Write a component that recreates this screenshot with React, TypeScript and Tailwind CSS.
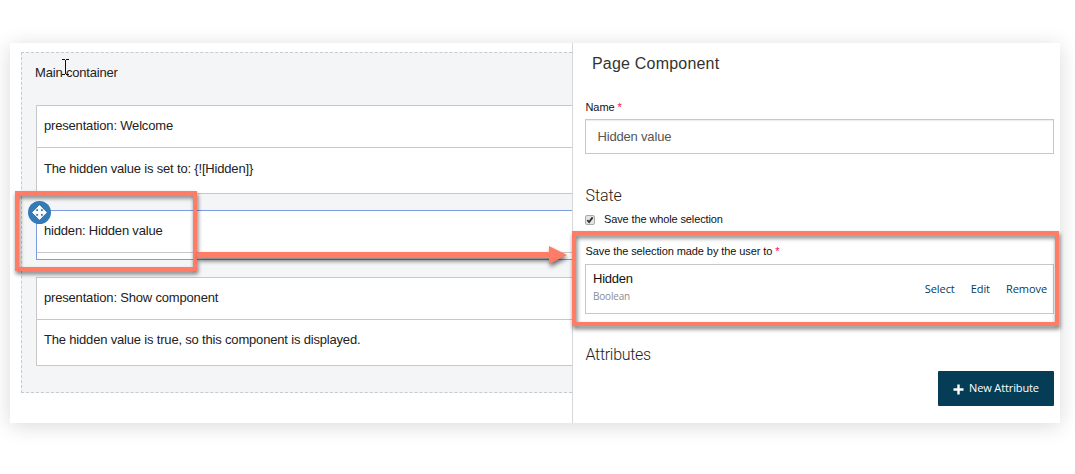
import React from "react";

function Asterisk() {
  return <span className="text-[#ff0a3c]">*</span>;
}

function MoveHandle() {
  return (
    <svg className="absolute -left-[9px] -top-[10px]" width="23" height="23" viewBox="0 0 23 23">
      <circle cx="11.5" cy="11.5" r="11.5" fill="#337ab7" />
      <path
        d="M11.5 4.6l3.2 3.2h-2.2v2.7h2.7V8.3l3.2 3.2-3.2 3.2v-2.2h-2.7v2.7h2.2l-3.2 3.2-3.2-3.2h2.2v-2.7H7.8v2.2L4.6 11.5l3.2-3.2v2.2h2.7V7.8H8.3z"
        fill="#fff"
        stroke="#fff"
        strokeWidth=".9"
      />
    </svg>
  );
}

function Panel({ title, children }: { title: string; children: React.ReactNode }) {
  return (
    <div className="h-[89px] border border-r-0 border-[#c8c8c8] bg-white">
      <div className="flex h-[42px] items-center border-b border-[#c8c8c8] pb-[2px] pl-[7px]">{title}</div>
      {children}
    </div>
  );
}

function Canvas() {
  return (
    <div className="w-[562px] pl-[11px] pt-[9px] text-[13px] leading-5 tracking-[-0.18px] text-[#222]">
      <div className="flex h-[341px] flex-col border border-r-0 border-dashed border-[#c8cbce] bg-[#f4f5f7] pl-[14px]">
        <div className="-ml-px h-[52px] pt-[10px]">Main container</div>
        <Panel title="presentation: Welcome">
          <div className="flex h-[41px] items-center pl-[7px]">{"The hidden value is set to: {![Hidden]}"}</div>
        </Panel>
        <div className="relative mt-4 h-[50px] border border-r-0 border-[#7d9be0] bg-white">
          <div className="flex h-[42px] items-center border-b border-[#c8c8c8] pb-[2px] pl-[7px]">
            hidden: Hidden value
          </div>
          <MoveHandle />
        </div>
        <div className="mt-[17px]">
          <Panel title="presentation: Show component">
            <div className="flex h-[41px] items-center pb-[2px] pl-[7px]">
              The hidden value is true, so this component is displayed.
            </div>
          </Panel>
        </div>
      </div>
    </div>
  );
}

function Checkbox() {
  return (
    <svg width="10" height="10" viewBox="0 0 10 10">
      <rect x=".5" y=".5" width="9" height="9" rx="1.5" fill="#e4e4e4" stroke="#aaa" />
      <path d="M2.3 5.2l1.8 1.9 3.5-4.7" fill="none" stroke="#333" strokeWidth="1.8" />
    </svg>
  );
}

function Properties() {
  return (
    <div className="flex w-[488px] flex-col border-l border-[#d5d7d9] bg-white pl-3 pr-[6px] text-[11px] leading-4 tracking-[-0.07px] text-[#111]">
      <h1 className="ml-[7px] mt-[10px] text-[16px] leading-[22px] tracking-[0.2px] text-[#333]">Page Component</h1>
      <label className="ml-[0.5px] mt-[24px]">
        Name <Asterisk />
      </label>
      <div className="mt-1 flex h-[35px] items-center border border-[#c8c8c8] pl-[11.5px] text-[13px] tracking-[-0.18px] text-[#555] shadow-[inset_0_1px_1px_rgba(0,0,0,0.075)]">
        Hidden value
      </div>
      <h2 className="ml-[0.5px] mt-[31px] font-['Roboto',sans-serif] text-[16px] font-light leading-[22px] tracking-[-0.1px] text-[#222]">
        State
      </h2>
      <div className="mt-[4px] flex h-4 items-center">
        <div className="pt-[2px]">
          <Checkbox />
        </div>
        <span className="ml-[9px] tracking-[-0.12px]">Save the whole selection</span>
      </div>
      <label className="ml-[0.5px] mt-4 tracking-[-0.09px]">
        Save the selection made by the user to <Asterisk />
      </label>
      <div className="mt-[5px] flex h-[50px] items-center justify-between border border-[#c8c8c8] pl-[7px] pr-[6px]">
        <div className="pb-[4px]">
          <div className="text-[13px] tracking-[-0.25px]">Hidden</div>
          <div className="mt-[2px] font-['Open_Sans',sans-serif] text-[10px] leading-[14px] tracking-[-0.2px] text-[#8a8d91]">
            Boolean
          </div>
        </div>
        <div className="flex gap-4 font-['Open_Sans',sans-serif] text-[11px] text-[#053d57]">
          <span>Select</span>
          <span>Edit</span>
          <span>Remove</span>
        </div>
      </div>
      <h2 className="ml-[0.5px] mt-[30px] font-['Roboto',sans-serif] text-[16px] font-light leading-[22px] tracking-[-0.3px] text-[#222]">
        Attributes
      </h2>
      <button className="mt-[5px] flex h-[35px] w-[116px] items-center self-end rounded-[1px] bg-[#053d57] pb-[2px] pl-[15px] font-['Open_Sans',sans-serif] text-[11px] tracking-[-0.12px] text-white">
        <svg className="mt-[3px]" width="11" height="11" viewBox="0 0 11 11">
          <path d="M5.5 0.5v10M.5 5.5h10" stroke="#fff" strokeWidth="2.4" />
        </svg>
        <span className="ml-[5px]">New Attribute</span>
      </button>
    </div>
  );
}

function Cursor() {
  return (
    <svg className="absolute left-[62px] top-[59px]" width="8" height="16" viewBox="0 0 8 16">
      <path d="M0 .5h3M4 .5h3M3.5 1v14M0 15.5h3M4 15.5h3" stroke="#111" fill="none" />
    </svg>
  );
}

function Callouts() {
  return (
    <>
      <div className="absolute left-[15px] top-[191px] h-[80px] w-[182px] border-4 border-[#ff7c66] drop-shadow-[1px_3px_2px_rgba(0,0,0,0.55)]" />
      <svg
        className="absolute left-[197px] top-[246px] drop-shadow-[1px_3px_2px_rgba(0,0,0,0.55)]"
        width="370"
        height="18"
        viewBox="0 0 370 18"
      >
        <path d="M3 6H352V0L370 9L352 18V12H3A3 3 0 0 1 3 6z" fill="#ff7c66" />
      </svg>
      <div className="absolute left-[572px] top-[231px] h-[95px] w-[487px] border-4 border-[#ff7c66] drop-shadow-[1px_3px_2px_rgba(0,0,0,0.55)]" />
    </>
  );
}

export default function App() {
  return (
    <div className="relative h-[474px] w-[1075px] overflow-hidden bg-white px-[10px] pt-[43px] font-['Liberation_Sans',Arial,sans-serif]">
      <main className="flex h-[380px] w-[1050px] bg-white shadow-[0_3px_20px_rgba(0,0,0,0.15)]">
        <Canvas />
        <Properties />
      </main>
      <Cursor />
      <Callouts />
    </div>
  );
}
